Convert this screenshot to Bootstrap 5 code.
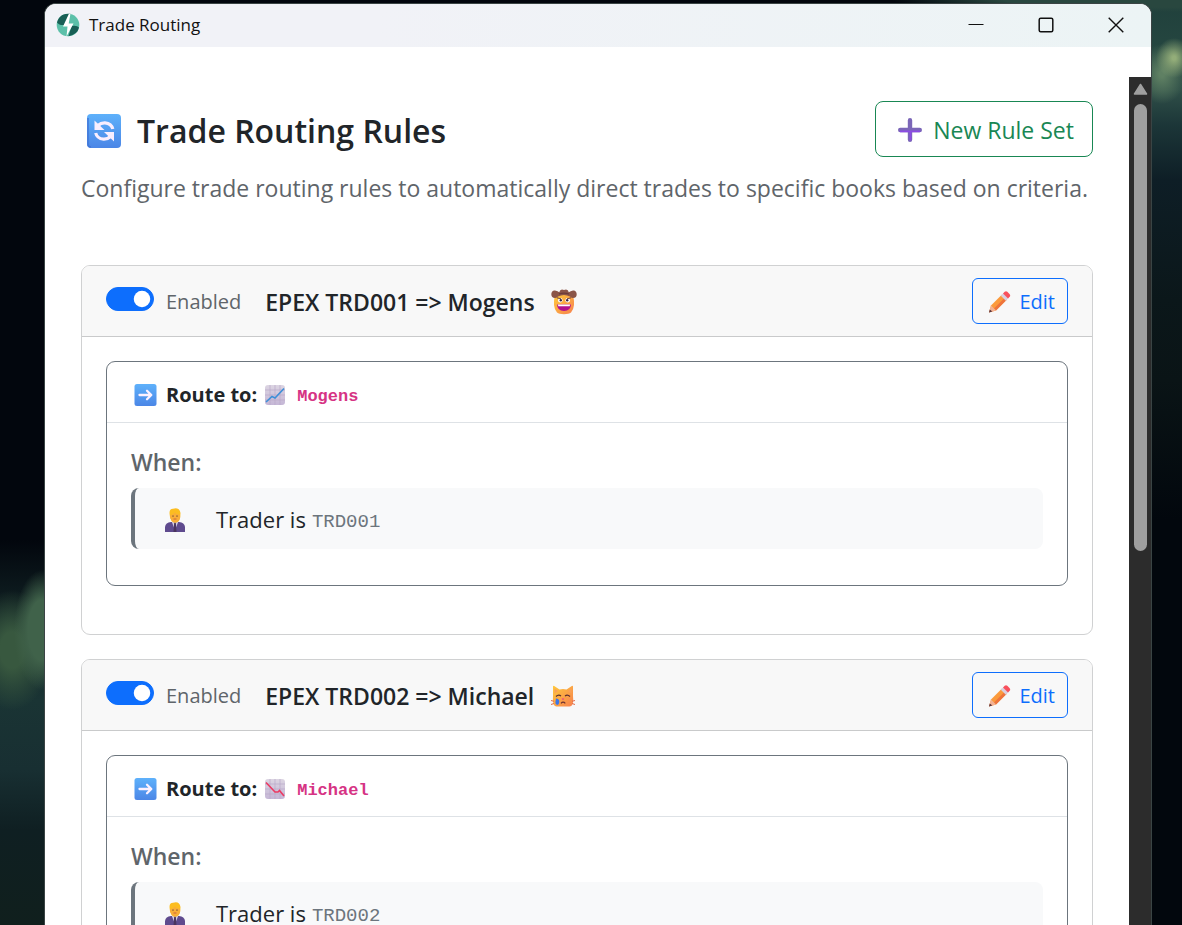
<!DOCTYPE html>
<html lang="en">
<head>
<meta charset="utf-8">
<meta name="viewport" content="width=device-width, initial-scale=1">
<title>Trade Routing</title>
<link href="https://cdn.jsdelivr.net/npm/bootstrap@5.3.0/dist/css/bootstrap.min.css" rel="stylesheet">
<style>
  :root { --ink: #212529; --line: #d0d1d2; }
  body {
    font-family: "Open Sans", "Noto Sans", sans-serif;
    color: var(--ink);
    padding: 3px 30px 0 44px;
    background:
      radial-gradient(ellipse 28px 60px at 42px 630px, #40624a 50%, transparent 100%) no-repeat,
      radial-gradient(ellipse 40px 60px at 12px 650px, #38583f 30%, transparent 100%) no-repeat,
      radial-gradient(ellipse 18px 20px at calc(100% - 8px) 58px, #93ad79 10%, transparent 100%) no-repeat,
      radial-gradient(ellipse 24px 30px at calc(100% - 20px) 74px, #5f8063 10%, transparent 100%) no-repeat,
      radial-gradient(ellipse 280px 12px at calc(100% - 10px) 0, #29473f 60%, transparent 100%) no-repeat,
      linear-gradient(#02060d 540px, #122426 620px, #1a3434 700px, #182f32 770px, #0f1f22 830px, #101f1d 925px) 0 0 / 50px 100% no-repeat,
      linear-gradient(#20403c 0, #254640 50px, #2f4f48 90px, #1c3638 125px, #0e1e26 180px, #0b171a 300px, #0a1416 380px, #02070d 520px) 100% 0 / 40px 100% no-repeat,
      #02060d;
  }
  .app-window { border: 1px solid #3a4444; border-bottom: 0; border-radius: 12px 12px 0 0; background: #fff; }
  .title-bar { height: 43px; padding: 0 19px 2px 11px; background: linear-gradient(90deg, #f1f2f7 30%, #ecf4f5); color: #111; font-size: 17px; line-height: 24px; gap: 9px; }
  .caption-buttons { gap: 38px; }
  .caption-buttons button { width: 32px; height: 32px; }
  .view-area { margin-top: 30px; min-height: 0; }
  .page-content { padding: 24px 36px; }
  .scroll-track { width: 22px; flex: none; background: #2c2c2c; padding-top: 5px; }
  .scroll-thumb { width: 13px; height: 53%; margin-top: 7px; border-radius: 7px; background: #9f9f9f; }

  .page-title { font-size: 32px; line-height: 40px; font-weight: 600; gap: 16px; padding: 4px 6px 0; }
  .btn-new { --bs-btn-padding-x: 18px; height: 56px; padding-top: 8px; font-size: 23px; border-radius: 8px; gap: 7px; }
  .page-note { font-size: 23px; line-height: 34px; color: #5f656a; margin: 14px 0 60px; }

  .rule-set { border-color: var(--line); border-radius: 9px; margin-bottom: 24px; }
  .rule-set > .card-header { padding: 12px 24px; background: #f8f8f8; border-color: #c9cacb; border-radius: 8px 8px 0 0; }
  .rule-set > .card-body { padding: 24px; }
  .rule-switch { padding: 0; min-height: 0; gap: 12px; margin: 0 24px 0 0; }
  .rule-switch .form-check-input { float: none; width: 48px; height: 24px; margin: 0 0 4px; }
  .rule-switch label { font-size: 20px; line-height: 30px; padding-top: 2px; color: #5f656a; }
  .rule-name { font-size: 23px; line-height: 30px; font-weight: 600; gap: 16px; padding-top: 2px; }
  .btn-edit { --bs-btn-padding-x: 12px; height: 46px; padding-top: 8px; font-size: 20px; border-radius: 6px; gap: 5px; }

  .route { border-color: #6c757d; border-radius: 9px; margin-bottom: 24px; }
  .route > .card-header { background: none; border-color: #dee2e6; padding: 18px 24px 12px; font-size: 20px; line-height: 30px; gap: 6px; }
  .route > .card-body { padding: 24px 24px 36px; }
  .route code { font-family: "Liberation Mono", monospace; font-size: 17px; line-height: 24px; font-weight: 700; color: #d63384; padding: 4px 0 0 4px; }
  .when-label { font-size: 23px; line-height: 30px; font-weight: 600; color: #5f656a; margin-bottom: 11px; }
  .condition { background: #f8f9fa; border-left: 4px solid #6c757d; border-radius: 8px; padding: 13px 24px 11px; font-size: 22px; line-height: 37px; }
  .condition svg { margin: 1px 25px 0 0; }
  .condition .value { font-family: "Liberation Mono", monospace; font-size: 19px; line-height: 30px; color: #6c757d; padding-top: 4px; margin-left: 6px; }
  svg { flex: none; }
</style>
</head>
<body class="vh-100 overflow-hidden">

<svg width="0" height="0" class="position-absolute" aria-hidden="true">
  <defs>
    <linearGradient id="blue" x1="0" y1="0" x2="0" y2="1"><stop offset="0" stop-color="#5eb1fb"/><stop offset="1" stop-color="#4b86e6"/></linearGradient>
    <linearGradient id="face" x1="0" y1="0" x2="1" y2="1"><stop offset="0" stop-color="#ffc93b"/><stop offset="1" stop-color="#f7814f"/></linearGradient>
    <linearGradient id="chart" x1="0" y1="0" x2="0" y2="1"><stop offset="0" stop-color="#dcd5e2"/><stop offset="1" stop-color="#c5b7d6"/></linearGradient>
  </defs>
  <symbol id="i-refresh" viewBox="0 0 34 34">
    <rect width="34" height="34" rx="4" fill="url(#blue)"/><path d="M1 4v26q0 3 3 3" fill="none" stroke="#4277d8" stroke-width="1.500"/>
    <path d="M11 11.500Q14 8.600 18 8.800 24.500 9.500 25.800 15" fill="none" stroke="#faeefe" stroke-width="3.200"/>
    <path d="M7.500 6.500v9.500h10z" fill="#faeefe"/>
    <path d="M23.500 22.500Q20.500 25.400 16.500 25.200 10 24.500 8.700 19" fill="none" stroke="#faeefe" stroke-width="3.200"/>
    <path d="M27 27.500V18H17z" fill="#faeefe"/>
  </symbol>
  <symbol id="i-arrow" viewBox="0 0 22 22">
    <rect width="22" height="22" rx="2.500" fill="url(#blue)"/>
    <path d="M5 11h11M12.500 6.700l4.300 4.300-4.300 4.300" fill="none" stroke="#fdf1ff" stroke-width="2.300" stroke-linecap="round" stroke-linejoin="round"/>
  </symbol>
  <symbol id="i-plus" viewBox="0 0 24 24"><path d="M12 2.200v19.600M2.200 12h19.600" stroke="#7b66b8" stroke-width="4.400" stroke-linecap="round"/><path d="M2.500 13.300h19M12.500 14v7.500" stroke="#8c4be4" stroke-width="1.800" stroke-linecap="round"/></symbol>
  <symbol id="i-pencil" viewBox="0 0 22 22">
    <path d="M0.500 21.500l2-7 11-11 5 5-11 11z" fill="#fb9a3c"/><path d="M5.500 17.500l11-11 2 2-11 11z" fill="#ee743c"/>
    <path d="M2.500 14.500l5 5-7 2z" fill="#f3b294"/><path d="M1.300 18.500l2.500 2-3.300 1z" fill="#59333c"/>
    <path d="M12.300 4.700l2.500-2.500 5 5-2.500 2.500z" fill="#d9cfe0"/><path d="M14.500 2.500l1.700-1.700q1.300-1 2.600 0l2.400 2.400q1 1.300 0 2.600L19.500 7.500z" fill="#f8505c"/>
  </symbol>
  <symbol id="i-cowboy" viewBox="0 0 26 26">
    <path d="M3 12q0-5 4-6h12q4 1 4 6v4q-.5 5-3 7.500-2 1.700-7 1.700t-7-1.700Q3.500 21 3 16z" fill="url(#face)"/>
    <path d="M.3 5Q.8 1 4 1.500q3 .5 4.200 1.700Q9 .6 11 .5q2 .8 4 0 2.200.1 2.800 2.700Q19.500 2 22 1.500q3.200-.5 3.700 3.500.2 4-3.700 4-1.500 0-3-1.500-3-1.500-6-1.500T7 7.500Q5.500 9 4 9 .3 9 .3 5z" fill="#8b5548"/>
    <path d="M8 4.800q5-1.300 10 0" fill="none" stroke="#6b3d3a" stroke-width="1.200"/>
    <circle cx="9.300" cy="11.300" r="2.300" fill="#fff"/><circle cx="16.700" cy="11.300" r="2.300" fill="#fff"/><circle cx="9.800" cy="11.300" r="1.200" fill="#3b2540"/><circle cx="16.200" cy="11.300" r="1.200" fill="#3b2540"/>
    <path d="M6 8.800l4 1M20 8.800l-4 1" stroke="#5f3437" stroke-width=".9"/>
    <path d="M6 15.500h14q-.3 6.500-7 6.500t-7-6.500z" fill="#b4108c"/><path d="M6.800 15.500h12.400l-.5 1.800H7.300z" fill="#fff"/>
  </symbol>
  <symbol id="i-cat" viewBox="0 0 26 26">
    <path d="M3 13V3.300Q3.300 2.500 4.200 3L9.500 6.500q3.500-1 7 0L21.800 3q1-.4 1.200.4V13q1.300 10-3.500 10.500H6.500Q2 23 3 13z" fill="url(#face)"/>
    <path d="M4.500 5.500v5L8 8zM21.500 5.500v5L18 8z" fill="#f9a05a"/>
    <path d="M6 13.500q2.500-2.500 5-.5M15 13q2.500-2 5 .5" fill="none" stroke="#5b3030" stroke-width="1.200"/>
    <path d="M6 15.500q3.500 0 3.300 3.500Q9 22 7.500 22 5 21.500 5.500 18.500z" fill="#3c76e8"/>
    <path d="M11.700 15.500h2.600L13 17.300z" fill="#e93493"/><path d="M11 20.300q2-2.500 4.300 0" fill="none" stroke="#6d3030" stroke-width="1.200"/>
    <path d="M1 17.500l3 .8M1 21.500l3-1M25 17.500l-3 .8M25 21.500l-3-1" stroke="#e26a48" stroke-width="1"/>
  </symbol>
  <symbol id="i-grid" viewBox="0 0 20 20"><rect width="20" height="20" rx="3" fill="url(#chart)"/><path d="M5 0v20M10 0v20M15 0v20M0 5h20M0 10h20M0 15h20" stroke="#b9abc9" stroke-width=".7"/></symbol>
  <symbol id="i-up" viewBox="0 0 20 20"><use href="#i-grid"/><path d="M1 17l6-5.500 3 1.500 9-9.500" fill="none" stroke="#3d8fd8" stroke-width="1.600"/></symbol>
  <symbol id="i-down" viewBox="0 0 20 20"><use href="#i-grid"/><path d="M1 3.500l9 9.500h3l1.500-1.500L19 17" fill="none" stroke="#ec3a62" stroke-width="1.600"/></symbol>
  <symbol id="i-person" viewBox="0 0 20 24">
    <path d="M0 24v-5q.5-4.500 6-5h8q5.500.5 6 5v5z" fill="#5f4b8e"/><path d="M6.800 14l3.200 8 3.200-8z" fill="#d5cde2"/><path d="M9.200 14.500h1.600L11.500 24h-3z" fill="#4a355e"/>
    <path d="M4.600 6Q4 1 8 .8q6.500-2 7.500 4.200l-.3 4q-1 5.500-5 5.500T5 9z" fill="#fcbd20"/><path d="M5 7q3 0 4.500-2.500Q12 7 15 6.500l.2 3q-1 5-5 5T5 9z" fill="#f9ae38"/>
    <path d="M8 7.500v1.200M12 7.500v1.200" stroke="#4b2d33"/><path d="M8.500 11h3" stroke="#c2503c" stroke-width=".8"/>
  </symbol>
</svg>

<div class="app-window d-flex flex-column h-100 overflow-hidden">
  <header class="title-bar d-flex align-items-center flex-shrink-0">
    <svg width="24" height="24" viewBox="0 0 24 24" aria-hidden="true">
      <circle cx="12" cy="12" r="11.300" fill="#5cc0a9"/>
      <path d="M1 9.500Q2.500 2.500 9.500 1l5-.2L8.500 12Q3 12.500 1 9.500z" fill="#185f55"/>
      <path d="M23 14.500Q21.500 21.500 12.500 23.300L15.500 13q5.500-1 7.500 1.500z" fill="#185f55"/>
      <path d="M12.800 1L7 13.500h4.500L10.500 23.500 17.500 10.500h-4.800L14.500.8z" fill="#fff"/>
    </svg>
    <span>Trade Routing</span>
    <div class="caption-buttons d-flex ms-auto">
      <button type="button" class="btn p-0 border-0 d-flex align-items-center justify-content-center" aria-label="Minimize"><svg width="16" height="16" viewBox="0 0 16 16"><path d="M.5 7.500h15" stroke="#111" stroke-width="1"/></svg></button>
      <button type="button" class="btn p-0 border-0 d-flex align-items-center justify-content-center" aria-label="Maximize"><svg width="16" height="16" viewBox="0 0 16 16"><rect x="1.200" y="1.200" width="13.600" height="13.600" rx="1.500" fill="none" stroke="#111" stroke-width="1.500"/></svg></button>
      <button type="button" class="btn p-0 border-0 d-flex align-items-center justify-content-center" aria-label="Close"><svg width="16" height="16" viewBox="0 0 16 16"><path d="M.7.700l14.600 14.600M15.300.700L.7 15.300" stroke="#111" stroke-width="1.400"/></svg></button>
    </div>
  </header>

  <div class="view-area d-flex flex-grow-1">
    <main class="page-content flex-grow-1 overflow-hidden">
      <div class="d-flex justify-content-between align-items-center">
        <h1 class="page-title d-flex align-items-center mb-0"><svg width="34" height="34" aria-hidden="true"><use href="#i-refresh"/></svg>Trade Routing Rules</h1>
        <button type="button" class="btn btn-outline-success btn-new d-inline-flex align-items-center"><svg width="32" height="24" aria-hidden="true"><use href="#i-plus"/></svg>New Rule Set</button>
      </div>
      <p class="page-note">Configure trade routing rules to automatically direct trades to specific books based on criteria.</p>

      <section class="card rule-set">
        <div class="card-header d-flex align-items-center">
          <div class="form-check form-switch rule-switch d-flex align-items-center">
            <input class="form-check-input" type="checkbox" role="switch" id="on1" checked>
            <label for="on1">Enabled</label>
          </div>
          <h2 class="rule-name d-flex align-items-center mb-0">EPEX TRD001 =&gt; Mogens <svg width="26" height="26" role="img" aria-label="cowboy"><use href="#i-cowboy"/></svg></h2>
          <button type="button" class="btn btn-outline-primary btn-edit d-inline-flex align-items-center ms-auto"><svg width="29" height="22" aria-hidden="true"><use href="#i-pencil"/></svg>Edit</button>
        </div>
        <div class="card-body">
          <div class="card route">
            <div class="card-header d-flex align-items-center">
              <svg width="29" height="22" aria-hidden="true"><use href="#i-arrow"/></svg><strong>Route to:</strong>
              <svg width="24" height="20" aria-hidden="true"><use href="#i-up"/></svg><code>Mogens</code>
            </div>
            <div class="card-body">
              <div class="when-label">When:</div>
              <div class="condition d-flex align-items-center"><svg width="32" height="24" aria-hidden="true"><use href="#i-person"/></svg>Trader is <span class="value">TRD001</span></div>
            </div>
          </div>
        </div>
      </section>

      <section class="card rule-set">
        <div class="card-header d-flex align-items-center">
          <div class="form-check form-switch rule-switch d-flex align-items-center">
            <input class="form-check-input" type="checkbox" role="switch" id="on2" checked>
            <label for="on2">Enabled</label>
          </div>
          <h2 class="rule-name d-flex align-items-center mb-0">EPEX TRD002 =&gt; Michael <svg width="26" height="26" role="img" aria-label="crying cat"><use href="#i-cat"/></svg></h2>
          <button type="button" class="btn btn-outline-primary btn-edit d-inline-flex align-items-center ms-auto"><svg width="29" height="22" aria-hidden="true"><use href="#i-pencil"/></svg>Edit</button>
        </div>
        <div class="card-body">
          <div class="card route">
            <div class="card-header d-flex align-items-center">
              <svg width="29" height="22" aria-hidden="true"><use href="#i-arrow"/></svg><strong>Route to:</strong>
              <svg width="24" height="20" aria-hidden="true"><use href="#i-down"/></svg><code>Michael</code>
            </div>
            <div class="card-body">
              <div class="when-label">When:</div>
              <div class="condition d-flex align-items-center"><svg width="32" height="24" aria-hidden="true"><use href="#i-person"/></svg>Trader is <span class="value">TRD002</span></div>
            </div>
          </div>
        </div>
      </section>
    </main>
    <div class="scroll-track d-flex flex-column align-items-center" aria-hidden="true">
      <svg width="15" height="15" viewBox="0 0 15 15"><path d="M7.500 2.500L13.500 12h-12z" fill="#9f9f9f" stroke="#9f9f9f" stroke-width="1.500" stroke-linejoin="round"/></svg>
      <div class="scroll-thumb"></div>
    </div>
  </div>
</div>

<script src="https://cdn.jsdelivr.net/npm/bootstrap@5.3.0/dist/js/bootstrap.bundle.min.js"></script>
</body>
</html>
